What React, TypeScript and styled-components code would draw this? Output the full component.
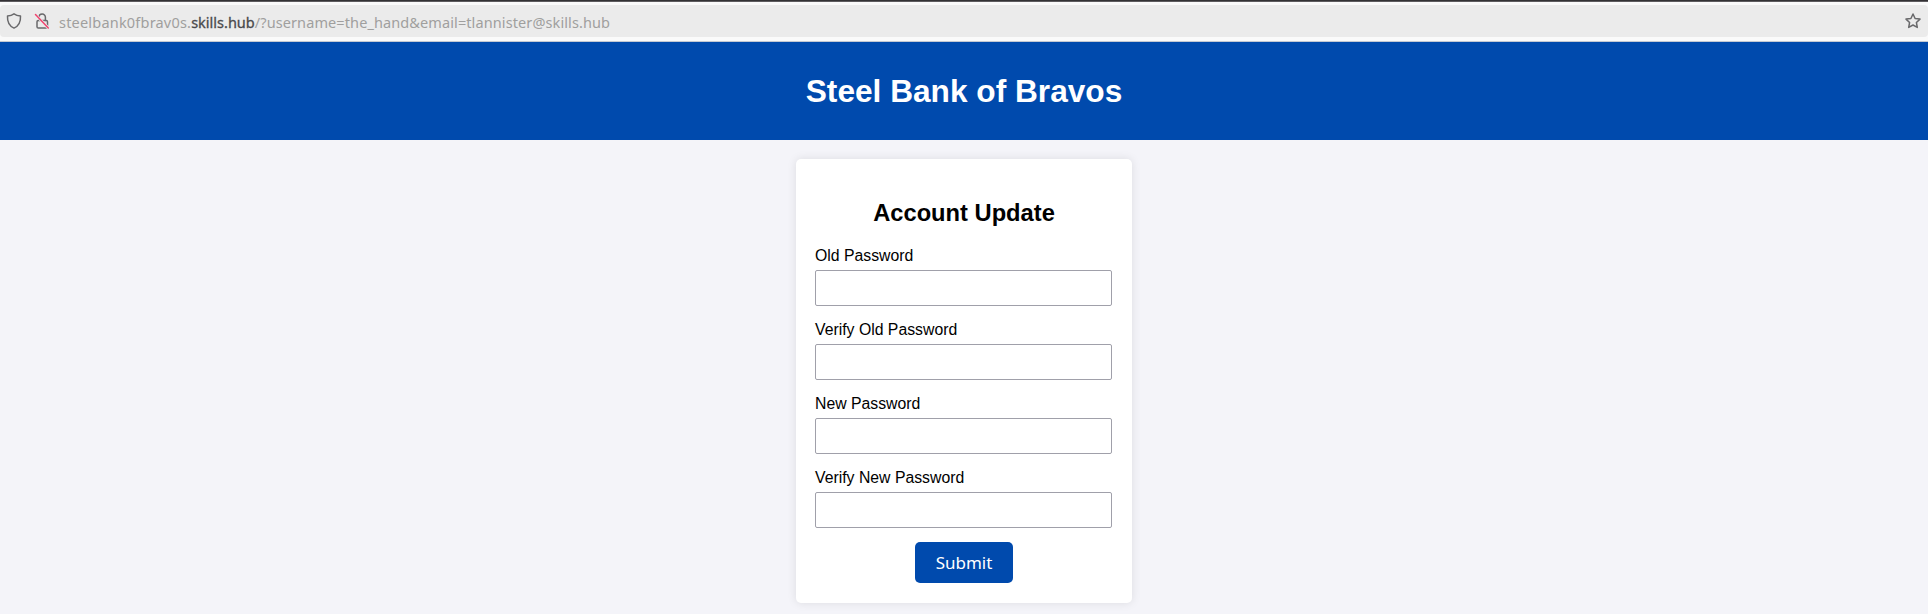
import React from "react";
import styled, { createGlobalStyle } from "styled-components";

const GlobalStyle = createGlobalStyle`
  * { box-sizing: border-box; }
  body {
    margin: 0;
    background: #f4f4f9;
    font-family: "Liberation Sans", Arial, sans-serif;
    font-size: 15.8px;
    color: #000;
  }
`;

const Page = styled.div`
  height: 614px;
  overflow: hidden;
`;

const Toolbar = styled.div`
  height: 42px;
  padding: 4px 0 4px;
  background: #fafafa;
  border-top: 1px solid #333134;
  border-bottom: 1px solid #c4c9d2;
  box-shadow: inset 0 1px 0 #5d5b5e;
`;

const AddressBar = styled.div`
  height: 32px;
  display: flex;
  align-items: center;
  padding: 0 7px 0 6px;
  border-radius: 4px;
  background: #ebebeb;
`;

const Icon = styled.svg<{ $gap?: number }>`
  width: 16px;
  height: 16px;
  flex: none;
  margin-right: ${(p) => p.$gap ?? 0}px;
  overflow: visible;
  fill: none;
  stroke: #69696b;
  stroke-width: 1.5;
  stroke-linecap: round;
  stroke-linejoin: round;
`;

const Url = styled.div`
  flex: 1;
  display: flex;
  padding-top: 2px;
  font-family: "Noto Sans", sans-serif;
  font-size: 14.5px;
  line-height: 20px;
  white-space: pre;
`;

const UrlPart = styled.span<{ $strong?: boolean; $spacing: number }>`
  color: ${(p) => (p.$strong ? "#4a4a4c" : "#a09f9e")};
  -webkit-text-stroke: ${(p) => (p.$strong ? "0.3px #4a4a4c" : "0")};
  letter-spacing: ${(p) => p.$spacing}px;
`;

const Header = styled.header`
  height: 98px;
  display: flex;
  align-items: center;
  justify-content: center;
  padding-bottom: 1px;
  background: #004aad;
  color: #fff;
`;

const Title = styled.h1`
  margin: 0;
  font-size: 31.65px;
  line-height: 36px;
`;

const Card = styled.form`
  width: 336px;
  height: 444px;
  margin: 19px auto 0;
  padding: 40px 19px 20px;
  display: flex;
  flex-direction: column;
  background: #fff;
  border-radius: 5px;
  box-shadow: 0 0 10px rgba(0, 0, 0, 0.1);
`;

const Heading = styled.h2`
  margin: 0 0 20px;
  font-size: 23.7px;
  line-height: 28px;
  text-align: center;
`;

const Field = styled.label`
  display: block;
  height: 74.2px;
  line-height: 18px;
`;

const Input = styled.input`
  display: block;
  width: 297px;
  height: 36px;
  margin-top: 5px;
  padding: 8px;
  border: 1px solid #a0a0aa;
  border-radius: 2px;
  background: #fff;
  outline: none;
`;

const Submit = styled.button`
  align-self: center;
  width: 98px;
  height: 41px;
  margin-top: -1px;
  padding: 0;
  border: 0;
  border-radius: 5px;
  background: #004aad;
  color: #fff;
  font: 17px/40px "Noto Sans", sans-serif;
`;

const fields = ["Old Password", "Verify Old Password", "New Password", "Verify New Password"];

export default function App() {
  return (
    <Page>
      <GlobalStyle />
      <Toolbar>
        <AddressBar>
          <Icon viewBox="0 0 16 16" $gap={12}>
            <path d="M8 .8C6.2 2.1 4 2.8 1.5 3.1c-.3 5.600 1.500 9.800 6.500 12 5-2.200 6.800-6.400 6.500-12C12 2.800 9.800 2.100 8 .8Z" />
          </Icon>
          <Icon viewBox="0 0 16 16" $gap={9}>
            <rect x="3" y="7.500" width="10.500" height="7.500" rx="1.300" />
            <path d="M5 7.500V4.300a3.200 3.200 0 0 1 6.400 0v3.200" />
            <path d="M1.500 1.500 14.300 15" stroke="#ebebeb" strokeWidth="3" />
            <path d="M1.500 1.500 14.300 15" stroke="#f0436e" />
          </Icon>
          <Url>
            <UrlPart $spacing={0.2}>steelbank0fbrav0s.</UrlPart>
            <UrlPart $spacing={0} $strong>skills.hub</UrlPart>
            <UrlPart $spacing={0.1}>/?username=the_hand&amp;email=tlannister@skills.hub</UrlPart>
          </Url>
          <Icon viewBox="0 0 16 16">
            <path d="m8 1 2.100 4.500 4.900.6-3.600 3.400.9 4.900L8 12l-4.300 2.400.9-4.900L1 6.100l4.900-.6Z" />
          </Icon>
        </AddressBar>
      </Toolbar>
      <Header>
        <Title>Steel Bank of Bravos</Title>
      </Header>
      <Card>
        <Heading>Account Update</Heading>
        {fields.map((name) => (
          <Field key={name}>
            {name}
            <Input type="password" />
          </Field>
        ))}
        <Submit type="button">Submit</Submit>
      </Card>
    </Page>
  );
}
